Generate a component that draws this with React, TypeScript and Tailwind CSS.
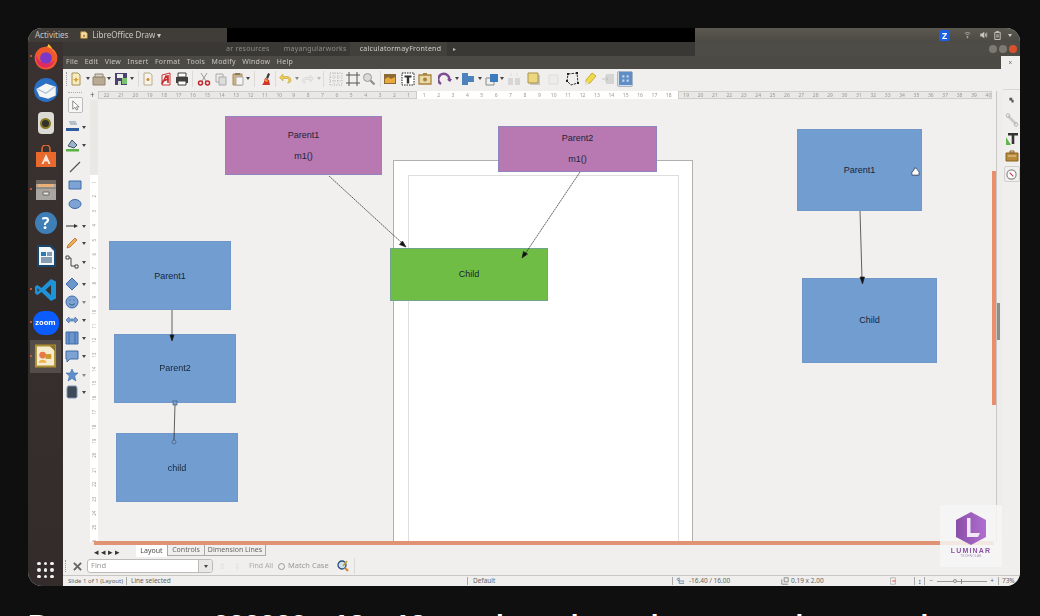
import type { ReactNode } from "react";

const left = Array.from({ length: 22 }, (_, i) => 22 - i);
const mid = Array.from({ length: 18 }, (_, i) => i + 1);
const right = Array.from({ length: 22 }, (_, i) => i + 19);
const vert = Array.from({ length: 26 }, (_, i) => i + 1);

function I({ children, className = "" }: { children: ReactNode; className?: string }) {
  return (
    <svg viewBox="0 0 14 14" className={"w-[14px] h-[14px] shrink-0 " + className}>
      {children}
    </svg>
  );
}

function Drop({ className = "" }: { className?: string }) {
  return (
    <span className={"w-0 h-0 shrink-0 border-x-[2px] border-t-[3px] border-x-transparent border-t-[#444] " + className} />
  );
}

function Sep({ className = "" }: { className?: string }) {
  return <span className={"w-px h-[16px] bg-[#dcdad7] shrink-0 " + className} />;
}

function Node({ className, children }: { className: string; children: ReactNode }) {
  return (
    <div className={"absolute flex flex-col items-center justify-center text-[9px] leading-none font-['Liberation_Sans',sans-serif] text-[#172538] " + className}>
      {children}
    </div>
  );
}

function Dock({ children, pip = false, active = false }: { children: ReactNode; pip?: boolean; active?: boolean }) {
  return (
    <div className={active ? "relative h-[33.3px] flex items-center justify-center bg-[#544c49] mx-[2px]" : "relative h-[33.3px] flex items-center justify-center"}>
      {pip && <span className={active ? "absolute left-0 top-[15px] w-[2px] h-[2px] rounded-full bg-[#e9643a]" : "absolute left-[2px] top-[15px] w-[2px] h-[2px] rounded-full bg-[#e9643a]"} />}
      {children}
    </div>
  );
}

function Ruler({ nums, className }: { nums: number[]; className: string }) {
  return (
    <div className={"flex items-center h-[8px] overflow-hidden " + className}>
      {nums.map((n) => (
        <span key={n} className="w-[14.4px] shrink-0 text-center text-[5px] leading-none text-[#9a9895]">
          {n}
        </span>
      ))}
    </div>
  );
}

function Toolbar() {
  return (
    <div className="h-[22px] pb-[3px] bg-[#f0efed] flex items-center">
      <span className="ml-[3px] w-px h-[14px] border-l border-dotted border-[#999] shrink-0" />
      <I className="ml-[2px]"><path d="M3 1h6l2 2v10H3z" fill="#f5ecc0" stroke="#a39257" /><path d="M7 5l1 2 2 .5-2 1-1 2-1-2-2-1 2-.5z" fill="#e09a2b" /></I>
      <Drop className="ml-[3px]" />
      <I className="ml-[2px]"><path d="M1 5h12v8H1z" fill="#b9ab93" stroke="#8f8371" /><path d="M3 2h8v3H3z" fill="#d9d2c2" stroke="#8f8371" /></I>
      <Drop className="ml-[1px]" />
      <I className="ml-[3px]"><path d="M1 1h12v12H1z" fill="#4b4270" /><path d="M3 2h6v4H3z" fill="#eee" /><path d="M8 6h5v6H8z" fill="#79c46e" /><path d="M4 9h3v4H4z" fill="#ddd" /></I>
      <Drop className="ml-[2px]" />
      <Sep className="ml-[4px]" />
      <I className="ml-[2px]"><path d="M3 1h6l2 2v10H3z" fill="#f7f3e8" stroke="#b7ab92" /><circle cx="7" cy="7.5" r="1.5" fill="#d5872a" /></I>
      <I className="ml-[4px]"><path d="M3 13V3l8-2v12z" fill="#f8f4f2" stroke="#c43535" /><path d="M3 12l4-8 2 3-5 2zM9 3v8" stroke="#c92a2a" strokeWidth="1.6" fill="none" /></I>
      <I className="ml-[2px]"><path d="M1 5h12v6H1z" fill="#3f3f3f" /><path d="M3 1h8v4H3z" fill="#fff" stroke="#3f3f3f" /><path d="M3 9h8v4H3z" fill="#fff" stroke="#3f3f3f" /></I>
      <Sep className="ml-[3px]" />
      <I className="ml-[4px]"><path d="M4 1l5 8M10 1L5 9" stroke="#999" fill="none" /><circle cx="3.5" cy="11" r="2" fill="none" stroke="#c1272d" strokeWidth="1.5" /><circle cx="10.5" cy="11" r="2" fill="none" stroke="#c1272d" strokeWidth="1.5" /></I>
      <I className="ml-[3px]"><path d="M2 2h7v8H2z" fill="#ececec" stroke="#aaa" /><path d="M5 5h7v8H5z" fill="#dcdcdc" stroke="#aaa" /></I>
      <I className="ml-[3px]"><path d="M2 2h9v11H2z" fill="#cdb184" stroke="#a78c5f" /><path d="M5 5h7v8H5z" fill="#f4f4f2" stroke="#aaa" /><path d="M4 1h5v2H4z" fill="#8a7b60" /></I>
      <Drop className="ml-[1px]" />
      <Sep className="ml-[4px]" />
      <I className="ml-[5px]"><path d="M8 1l2 1-2 5-2-1z" fill="#3b3b3b" /><path d="M5 6l4 2 1 5H2c2-2 2-4 3-7z" fill="#d1342b" /><path d="M5 7l3 1.5-.6 1.5L4.500 9z" fill="#e9a13b" /></I>
      <Sep className="ml-[1px]" />
      <I className="ml-[2px]"><path d="M5 2L1.500 5.500 5 9V6.500h4c2 0 2.500 3 .5 4.500 3 0 4-2 3.200-4C12 4.800 10 4.500 9 4.500H5z" fill="#eccb55" stroke="#b79a2c" strokeWidth=".5" /></I>
      <Drop className="ml-[3px] border-t-[#888]" />
      <I className="ml-[2px]"><path d="M9 3l3.500 3.500L9 10V7.500H5c-2 0-2.500 2.500-.5 3.500-3 0-4-2-3-3.500C2.500 5.500 4 5.500 5 5.500h4z" fill="#e6e6e4" stroke="#cfcfcd" strokeWidth=".5" /></I>
      <Drop className="ml-[2px] border-t-[#bbb]" />
      <Sep className="ml-[2px]" />
      <I className="ml-[5px]"><path d="M1 1h12v12H1z" fill="none" stroke="#999" strokeDasharray=".8 1.600" /><path d="M1 5h12M1 9h12M5 1v12M9 1v12" stroke="#aaa" strokeDasharray=".8 1.600" /></I>
      <I className="ml-[3px]"><path d="M3 0v14M11 0v14M0 3h14M0 11h14" stroke="#555" /></I>
      <I className="ml-[2px]"><circle cx="5.500" cy="5.500" r="4" fill="#d9d9d9" stroke="#9a9a9a" /><path d="M8.500 8.500l4 4" stroke="#8a8a8a" strokeWidth="2" /></I>
      <Sep className="ml-[4px]" />
      <I className="ml-[2px]"><path d="M1 2h12v10H1z" fill="#8d6a33" /><path d="M2 7l3-2 3 2 4-2v6H2z" fill="#e8a93d" /></I>
      <I className="ml-[4px]"><path d="M1 1h12v12H1z" fill="#fff" stroke="#222" strokeDasharray="1.500 1" /><path d="M3.500 3.500h7v2h-2.300v6H5.800v-6H3.500z" fill="#333" /></I>
      <I className="ml-[3px]"><path d="M1 3h12v9H1z" fill="#e9d9a9" stroke="#a9843f" strokeWidth="1.300" /><circle cx="7" cy="7.500" r="2" fill="#a9843f" /><path d="M5 1h4v2H5z" fill="#a9843f" /></I>
      <I className="ml-[6px]"><path d="M3 12A5.500 5.500 0 1 1 11 9" fill="none" stroke="#7d4d93" strokeWidth="2.600" /><path d="M9 7l3 3 2-3z" fill="#7d4d93" /></I>
      <Drop className="ml-[3px]" />
      <I className="ml-[2px]"><path d="M1 1h6v12H1z" fill="#4d83bd" /><path d="M7 4h6v6H7z" fill="#4d83bd" /></I>
      <Drop className="ml-[3px]" />
      <I className="ml-[3px]"><path d="M1 6h8v7H1z" fill="none" stroke="#888" /><path d="M5 2h8v8H5z" fill="#3d7bc0" /></I>
      <Drop className="ml-[1px]" />
      <I className="ml-[3px]"><path d="M1 6h5v7H1zM8 6h5v7H8z" fill="#d6d6d6" /><path d="M4 1v3M10 1v3" stroke="#ddd" /></I>
      <I className="ml-[6px]"><path d="M3 3h10v10H3z" fill="#aaa" opacity=".6" /><path d="M1 1h10v10H1z" fill="#ecd77e" stroke="#a8934a" /></I>
      <I className="ml-[5px]"><path d="M3 3h9v9H3z" fill="#ececec" stroke="#dcdcdc" /></I>
      <I className="ml-[5px]"><path d="M3 2l9-1 1 10-7 2-4-4z" fill="none" stroke="#333" strokeDasharray="2.500 1" /><path d="M2 1h2v2H2zM11 0h2v2h-2zM12 10h2v2h-2zM1 8h2v2H1z" fill="#222" /></I>
      <I className="ml-[4px]"><path d="M3 8l6-7 4 3-6 7-4 1z" fill="#efd94f" stroke="#c9ae2a" /><path d="M3 9l-1 4 4-1z" fill="#e6e2d5" /></I>
      <I className="ml-[4px]"><path d="M5 2h8v10H5z" fill="#d4d4d2" /><path d="M1 7h6M4 4.500L7 7 4 9.500" stroke="#c3c3c1" fill="none" /></I>
      <span className="ml-[2px] w-[16px] h-[16px] rounded-[2px] border border-[#a9b4c4] bg-[#d9dfe8] flex items-center justify-center shrink-0">
        <svg viewBox="0 0 12 12" className="w-[13px] h-[13px]"><path d="M0 0h12v12H0z" fill="#5f8dc6" /><path d="M3 3h2v2H3zM7 3h2v2H7zM3 7h2v2H3zM7 7h2v2H7z" fill="#c5d6ea" /></svg>
      </span>
    </div>
  );
}

function LeftBar() {
  return (
    <div className="w-[27px] shrink-0 bg-[#f0efed] flex flex-col pl-[1px]">
      <span className="mt-[1px] ml-[4px] w-[14px] border-t border-dotted border-[#aaa]" />
      <span className="mt-[4px] ml-[4px] w-[15px] h-[16px] rounded-[2px] border border-[#bdbdbd] bg-[#f6f6f5] flex items-center justify-center">
        <svg viewBox="0 0 12 12" className="w-[11px] h-[11px]"><path d="M3 1v9l2.500-2 1.500 3 1.500-.8L7 7.500h3z" fill="#fff" stroke="#555" strokeWidth=".7" /></svg>
      </span>
      <div className="mt-[7px] h-[14px] flex items-center ml-[1px]">
        <I><path d="M4 2h7M5 4h7" stroke="#7a8eaa" /><path d="M1 8h13v3H1z" fill="#2e5c9e" /></I><Drop className="ml-[3px]" />
      </div>
      <div className="mt-[4px] h-[14px] flex items-center ml-[1px]">
        <I><path d="M3 8l4-6 5 5-3 3z" fill="#9bb4c9" stroke="#44536a" /><path d="M1 11h13v2.500H1z" fill="#5ab043" /></I><Drop className="ml-[3px]" />
      </div>
      <I className="mt-[8px] ml-[4px]"><path d="M2 12L12 2" stroke="#555" strokeWidth="1.200" /></I>
      <I className="mt-[4px] ml-[4px]"><path d="M1 3h12v8H1z" fill="#7da2d4" stroke="#3e6ca8" /></I>
      <I className="mt-[5px] ml-[4px]"><ellipse cx="7" cy="7" rx="6" ry="4.500" fill="#7da2d4" stroke="#3e6ca8" /></I>
      <div className="mt-[8px] h-[14px] flex items-center ml-[1px]">
        <I><path d="M1 7h9" stroke="#333" /><path d="M13 7l-4-2v4z" fill="#333" /></I><Drop className="ml-[3px]" />
      </div>
      <div className="mt-[3px] h-[14px] flex items-center ml-[1px]">
        <I><path d="M2 12l1-3 7-7 2 2-7 7z" fill="#eab24a" stroke="#b5562a" strokeWidth=".7" /></I><Drop className="ml-[3px]" />
      </div>
      <div className="mt-[5px] h-[14px] flex items-center ml-[1px]">
        <I><path d="M3 3h3v8h5" fill="none" stroke="#444" /><path d="M1 1h3v3H1zM10 10h3v3h-3z" fill="#fff" stroke="#444" /></I><Drop className="ml-[3px]" />
      </div>
      <div className="mt-[8px] h-[14px] flex items-center ml-[1px]">
        <I><path d="M7 1l6 6-6 6-6-6z" fill="#6b95cb" stroke="#3e6ca8" /></I><Drop className="ml-[3px]" />
      </div>
      <div className="mt-[4px] h-[14px] flex items-center ml-[1px]">
        <I><circle cx="7" cy="7" r="6" fill="#7da2d4" stroke="#3e6ca8" /><path d="M4.500 5h1M8.500 5h1M4 8.500c2 2 4 2 6 0" stroke="#2d5288" fill="none" /></I><Drop className="ml-[3px] border-t-[#888]" />
      </div>
      <div className="mt-[4px] h-[14px] flex items-center ml-[1px]">
        <I><path d="M1 7l3-3v2h6V4l3 3-3 3V8H4v2z" fill="#7da2d4" stroke="#3e6ca8" strokeWidth=".7" /></I><Drop className="ml-[3px]" />
      </div>
      <div className="mt-[4px] h-[14px] flex items-center ml-[1px]">
        <I><path d="M1 1h12v12H1z" fill="#6b95cb" stroke="#3e6ca8" /><path d="M4 1v12M10 1v12" stroke="#3e6ca8" /></I><Drop className="ml-[3px]" />
      </div>
      <div className="mt-[4px] h-[14px] flex items-center ml-[1px]">
        <I><path d="M1 2h12v8H5l-3 3v-3H1z" fill="#7da2d4" stroke="#3e6ca8" /></I><Drop className="ml-[3px]" />
      </div>
      <div className="mt-[5px] h-[14px] flex items-center ml-[1px]">
        <I><path d="M7 1l1.800 4H13l-3.300 3 1.200 5L7 10.500 3.100 13l1.200-5L1 5h4.200z" fill="#5f8fcb" stroke="#3e6ca8" strokeWidth=".6" /></I><Drop className="ml-[3px] border-t-[#888]" />
      </div>
      <div className="mt-[3px] h-[14px] flex items-center ml-[1px]">
        <I><path d="M3 1h8l1 2v9l-1 1H3l-1-1V3z" fill="#3f4a58" stroke="#7f93ad" /></I><Drop className="ml-[3px]" />
      </div>
    </div>
  );
}

function Canvas() {
  return (
    <div className="relative flex-1 bg-[#f2f0ee] overflow-hidden">
      {/* page and margin */}
      <div className="absolute left-[295px] top-[60px] w-[300px] h-[400px] bg-white border border-[#b0b0b0]" />
      <div className="absolute left-[310px] top-[75px] w-[271px] h-[380px] border border-[#dedede]" />

      <Node className="left-[127px] top-[16px] w-[157px] h-[59px] bg-[#b878b2] border border-[#9086bd] gap-[12px] text-[#2a1a2b]">
        <span>Parent1</span>
        <span>m1()</span>
      </Node>
      <Node className="left-[400px] top-[26px] w-[159px] h-[46px] bg-[#b878b2] border border-[#9086bd] gap-[12px] text-[#2a1a2b]">
        <span>Parent2</span>
        <span>m1()</span>
      </Node>
      <Node className="left-[292px] top-[148px] w-[158px] h-[53px] bg-[#70bd46] border border-[#71a58a] text-[#1d3612]">Child</Node>
      <Node className="left-[11px] top-[141px] w-[122px] h-[69px] pt-[1px] bg-[#729dd0] border border-[#6f98c8]">Parent1</Node>
      <Node className="left-[16px] top-[234px] w-[122px] h-[69px] bg-[#729dd0] border border-[#6f98c8]">Parent2</Node>
      <Node className="left-[18px] top-[333px] w-[122px] h-[69px] pt-[1px] bg-[#729dd0] border border-[#6f98c8]">child</Node>
      <Node className="left-[699px] top-[29px] w-[125px] h-[82px] bg-[#729dd0] border border-[#6f98c8]">Parent1</Node>
      <Node className="left-[704px] top-[178px] w-[135px] h-[85px] bg-[#729dd0] border border-[#6f98c8]">Child</Node>

      {/* connectors */}
      <svg className="absolute left-0 top-0 w-[894px] h-[442px]" viewBox="98 100 894 442">
        <g stroke="#222" strokeWidth=".7" fill="#111">
          <path d="M329 176L402 243" strokeDasharray="2 .6" />
          <path d="M406 247l-6.500-2.500 3-3.500z" />
          <path d="M580 172L525 254" strokeDasharray="2 .6" />
          <path d="M522 258l1.500-6.500 4 2.500z" />
          <path d="M860 211L862 279" />
          <path d="M862.500 284l-2.500-7h4.500z" />
          <path d="M172 310V340" />
          <path d="M172 341l-2-6h4z" />
          <path d="M175 404L174 440" />
        </g>
        <rect x="173" y="401" width="4" height="4" fill="#7f9fc8" stroke="#33507a" strokeWidth=".6" />
        <circle cx="174" cy="442" r="2" fill="#7f9fc8" stroke="#33507a" strokeWidth=".6" />
      </svg>

      {/* hand cursor */}
      <svg viewBox="0 0 10 10" className="absolute left-[813px] top-[67px] w-[9px] h-[9px]">
        <path d="M1 9V5.500L3 4l1-3 2 .5 1 1.500 2 2.500V9z" fill="#fff" stroke="#25364e" strokeWidth=".8" />
      </svg>
    </div>
  );
}

function SideBar() {
  return (
    <div className="flex shrink-0">
      {/* scrollbar column */}
      <div className="w-[4px] pt-[80px] bg-[#f2f0ee]">
        <div className="h-[234px] bg-[#e98f6c]" />
      </div>
      <div className="w-[7px] flex flex-col border-l border-[#c9c7c4] bg-[#eeedeb]">
        <div className="mt-[212px] w-[3px] h-[37px] bg-[#8f8d89]" />
      </div>
      <div className="w-[17px] bg-[#f0efed] border-t border-[#d9d7d4] -mt-[2px] flex flex-col items-center">
        <svg viewBox="0 0 10 10" className="mt-[7px] w-[7px] h-[7px]"><path d="M2 1h4v3h2v4H5V5H2z" fill="#555" /></svg>
        <I className="mt-[9px]"><path d="M3 3l8 8" stroke="#c9c9c9" strokeWidth="2.500" /><circle cx="3" cy="2.500" r="1.800" fill="none" stroke="#b5b5b5" /><circle cx="11" cy="11.500" r="1.800" fill="none" stroke="#b5b5b5" /></I>
        <I className="mt-[5px]"><path d="M1 5l5 8H1z" fill="#66b44b" /><path d="M3 1h10v2.500H9.300V12H6.700V3.500H3z" fill="#333" /></I>
        <I className="mt-[3px]"><path d="M1 4h12v8H1z" fill="#b88a3a" stroke="#8a6523" /><path d="M5 2h4v2H5z" fill="none" stroke="#8a6523" /><path d="M3 7h8" stroke="#e6d3a5" /></I>
        <span className="mt-[3px] w-[16px] h-[16px] rounded-[2px] border border-[#cfcfcf] flex items-center justify-center">
          <svg viewBox="0 0 12 12" className="w-[11px] h-[11px]"><circle cx="6" cy="6" r="5" fill="#fff" stroke="#888" strokeWidth="1.300" /><path d="M4 4l4 4" stroke="#c33a5a" strokeWidth="1.300" /></svg>
        </span>
      </div>
    </div>
  );
}

export default function App() {
  return (
    <div className="w-[1040px] h-[616px] bg-[#0f0f0f] overflow-hidden pt-[28px] px-[28px] font-['Noto_Sans',sans-serif]">
      <div className="relative w-[992px] h-[558px] rounded-[14px] overflow-hidden flex flex-col bg-[#f0efed] blur-[0.4px]">
        {/* top panel */}
        <div className="h-[14px] flex shrink-0">
          <div className="w-[199px] bg-[#403d39] flex items-center text-[8px] text-[#c8c5be]">
            <span className="ml-[7px]">Activities</span>
            <svg viewBox="0 0 10 10" className="ml-[12px] w-[8px] h-[8px]"><path d="M1 1h6l2 2v6H1z" fill="#f2e3b1" stroke="#c08b2c" /><circle cx="5" cy="6" r="1.500" fill="#d07d2c" /></svg>
            <span className="ml-[4px]">LibreOffice Draw ▾</span>
          </div>
          <div className="w-[468px] bg-black" />
          <div className="flex-1 bg-gradient-to-b from-[#5b584f] to-[#4c4a45] flex items-center">
            <span className="ml-[244px] w-[11px] h-[11px] rounded-[2px] bg-[#1c5fe0] flex items-center justify-center text-[9px] font-bold leading-none text-white">Z</span>
            <svg viewBox="0 0 10 10" className="ml-[14px] w-[7px] h-[8px]"><path d="M1 3c2-2 6-2 8 0M3 5c1-1 3-1 4 0M4.500 7h1v2h-1z" stroke="#c7c5bf" fill="none" /></svg>
            <svg viewBox="0 0 10 10" className="ml-[8px] w-[9px] h-[8px]"><path d="M1 3h2l3-2v8L3 7H1z" fill="#c7c5bf" /><path d="M7.500 3v4M9 2v6" stroke="#c7c5bf" /></svg>
            <svg viewBox="0 0 10 10" className="ml-[5px] w-[9px] h-[10px]"><path d="M2 2h6v8H2zM4 1h2v1H4z" fill="none" stroke="#cfcdc7" /><path d="M3.500 5h3M3.500 7h3" stroke="#cfcdc7" /></svg>
            <Drop className="ml-[6px] border-t-[#cfcdc7]" />
          </div>
        </div>

        <div className="flex-1 flex min-h-0">
          {/* dock */}
          <div className="w-[35px] shrink-0 bg-gradient-to-b from-[#3a3230] to-[#332c2b] flex flex-col">
            <div className="-mt-[2px]" />
            <Dock pip>
              <svg viewBox="0 0 24 24" className="w-[26px] h-[26px]">
                <circle cx="12" cy="13" r="10.500" fill="#f0582d" />
                <path d="M11 3c5-1 11 4 11 10 0-3-2-6-4-7 0-2-2-5-4-6 0 2-1 3-3 3z" fill="#ffc131" />
                <circle cx="12" cy="13" r="5.500" fill="#7c39c9" />
                <path d="M3 10c1 5 6 9 11 8 3-.5 5-2 6-4-1 5-5 8-9 8-5 0-9-5-8-12z" fill="#e02b5f" />
              </svg>
            </Dock>
            <Dock>
              <svg viewBox="0 0 24 24" className="w-[26px] h-[26px]">
                <circle cx="12" cy="12" r="11" fill="#2a6fc4" />
                <path d="M3 11l9-5 9 3v8l-7 3-8-2z" fill="#f5f5f5" />
                <path d="M4 11l8 4 8-6" fill="none" stroke="#a9c0da" />
              </svg>
            </Dock>
            <Dock>
              <span className="w-[16px] h-[22px] rounded-[4px] bg-[#dcdad4] flex items-center justify-center">
                <span className="w-[11px] h-[11px] rounded-full bg-[#33312c] border-2 border-[#8a7a24]" />
              </span>
            </Dock>
            <Dock>
              <svg viewBox="0 0 24 24" className="w-[24px] h-[24px]">
                <path d="M2 7h20v15H2z" fill="#e9692c" />
                <path d="M8 7V4a4 4 0 0 1 8 0v3" fill="none" stroke="#e9692c" strokeWidth="1.500" />
                <path d="M12 9l4.500 10h-2l-1-2.500h-3L9.500 19h-2z" fill="#f8e6dc" />
              </svg>
            </Dock>
            <Dock pip>
              <svg viewBox="0 0 24 24" className="w-[24px] h-[24px]">
                <path d="M2 2h20v20H2z" fill="#a9a6a1" />
                <path d="M2 2h20v4H2z" fill="#6b665f" />
                <path d="M4 6h16v3H4z" fill="#e9b077" />
                <path d="M2 10h20" stroke="#77736d" />
                <path d="M9 14h6v3H9z" fill="#ececec" stroke="#6b665f" />
              </svg>
            </Dock>
            <Dock>
              <span className="w-[22px] h-[22px] rounded-full bg-[#3f7fb8] flex items-center justify-center text-[16px] font-bold leading-none text-white">?</span>
            </Dock>
            <Dock>
              <svg viewBox="0 0 24 24" className="w-[24px] h-[24px]">
                <path d="M3 1h14l5 5v17H3z" fill="#18476e" />
                <path d="M5 3h11l4 4v14H5z" fill="#f4f6f8" />
                <path d="M7 8h5v4H7z" fill="#2b7cb5" />
                <path d="M13 9h5M13 11h5M7 14h11M7 16h11M7 18h11" stroke="#18476e" />
              </svg>
            </Dock>
            <Dock pip>
              <svg viewBox="0 0 24 24" className="w-[24px] h-[24px]">
                <path d="M17 1l5 2.500v17L17 23 7.500 14l-4 3L1 15.500v-7L3.500 7l4 3z" fill="#1f93da" />
                <path d="M17 7l-5.500 5 5.500 5z" fill="#33312f" />
                <path d="M3.500 10v4l2-2z" fill="#33312f" />
              </svg>
            </Dock>
            <Dock pip>
              <span className="w-[26px] h-[24px] rounded-[11px] bg-[#0b5cff] flex items-center justify-center text-[7.500px] font-bold leading-none text-white">zoom</span>
            </Dock>
            <Dock pip active>
              <svg viewBox="0 0 24 24" className="w-[23px] h-[24px]">
                <path d="M2 1h20v22H2z" fill="#f5ecd0" stroke="#ad8f2e" strokeWidth="2" />
                <path d="M16 1h6v6z" fill="#8a7224" />
                <circle cx="9" cy="11" r="3.500" fill="#e9774a" />
                <path d="M5 19c0-4 8-4 8 0z" fill="#efb34c" />
                <path d="M12 10h6v5h-6z" fill="#c79a2a" />
              </svg>
            </Dock>
            <div className="mt-auto mb-[8px] mx-auto grid grid-cols-3 gap-x-[3px] gap-y-[3px]">
              {Array.from({ length: 9 }, (_, i) => (
                <span key={i} className="w-[3.500px] h-[3.500px] rounded-full bg-[#f2f2f2]" />
              ))}
            </div>
          </div>

          {/* libreoffice window */}
          <div className="flex-1 min-w-0 flex flex-col">
            <div className="h-[14px] flex shrink-0 text-[7px] tracking-[0.25px] text-[#8f8d86]">
              <div className="w-[632px] bg-[#393834] flex items-center">
                <span className="ml-[163px]">ar resources</span>
                <span className="ml-[14px]">mayangularworks</span>
                <span className="ml-[3px] h-[14px] pl-[10px] pr-[6px] bg-[#41403b] flex items-center text-[#d2d0c9]">calculatormayFrontend</span>
                <span className="ml-[6px] text-[#bbb] text-[6px]">▸</span>
              </div>
              <div className="flex-1 bg-[#4e4c46] flex items-center justify-end pr-[3px] gap-[2px]">
                <span className="w-[8px] h-[8px] rounded-full bg-[#7c7a73]" />
                <span className="w-[8px] h-[8px] rounded-full bg-[#7c7a73]" />
                <span className="w-[8px] h-[8px] rounded-full bg-[#d9512c]" />
              </div>
            </div>
            <div className="h-[13px] bg-[#4b4a45] flex items-center shrink-0 text-[7px] tracking-[0.25px] text-[#c9c6bf]">
              <div className="ml-[3px] flex gap-[6.500px] flex-1">
                <span>File</span><span>Edit</span><span>View</span><span>Insert</span><span>Format</span><span>Tools</span><span>Modify</span><span>Window</span><span>Help</span>
              </div>
              <span className="w-[19px] h-[13px] bg-[#f0efed] text-[#555] text-[6px] flex items-center justify-center">x</span>
            </div>
            <Toolbar />

            <div className="flex-1 min-h-0 flex">
              <LeftBar />
              <div className="flex-1 min-w-0 flex flex-col">
                {/* horizontal ruler */}
                <div className="h-[9px] flex shrink-0 bg-[#f0efed]">
                  <span className="w-[8px] text-[8px] leading-[8px] text-[#555]">+</span>
                  <Ruler nums={left} className="w-[319px] bg-[#e9e8e5] border border-[#cfcdca] justify-end" />
                  <Ruler nums={mid} className="w-[261px] bg-white" />
                  <Ruler nums={right} className="w-[314px] bg-[#e9e8e5] border border-[#cfcdca]" />
                </div>
                <div className="flex-1 min-h-0 flex">
                  <div className="w-[8px] shrink-0 bg-white flex flex-col overflow-hidden">
                    <div className="h-[75px] shrink-0 bg-[#e9e8e5]" />
                    {vert.map((n) => (
                      <span key={n} className="h-[14.400px] shrink-0 flex items-center justify-center text-[4.500px] leading-none text-[#9a9895] -rotate-90">{n}</span>
                    ))}
                  </div>
                  <Canvas />
                </div>
              </div>
              <SideBar />
            </div>

            {/* slide tabs */}
            <div className="h-[15px] shrink-0 bg-[#f0efed] relative text-[7px] text-[#4a4a48] flex items-start">
              <div className="absolute left-[31px] top-[-1px] right-[26px] h-[4px] bg-[#df9274]" />
              <div className="ml-[31px] w-[42px] h-full flex items-center gap-[2px] pt-[3px] text-[#333]">
                <span className="text-[9px] leading-none">◂</span><span className="text-[9px] leading-none">◂</span><span className="text-[9px] leading-none">▸</span><span className="text-[9px] leading-none">▸</span>
              </div>
              <span className="h-[12px] mt-[3px] w-[31px] bg-white flex items-center justify-center">Layout</span>
              <span className="h-[11px] mt-[3px] w-[38px] border border-t-0 border-[#aaa] flex items-center justify-center text-[#666]">Controls</span>
              <span className="h-[11px] mt-[3px] w-[61px] border border-t-0 border-l-0 border-[#aaa] flex items-center justify-center text-[#666]">Dimension Lines</span>
            </div>

            {/* find bar */}
            <div className="h-[18px] shrink-0 bg-[#f0efed] flex items-center text-[7.500px] text-[#777]">
              <span className="ml-[2px] w-px h-[12px] border-l border-dotted border-[#999]" />
              <svg viewBox="0 0 10 10" className="ml-[7px] w-[9px] h-[9px]"><path d="M1 1l8 8M9 1L1 9" stroke="#666" strokeWidth="2.200" /></svg>
              <div className="ml-[5px] w-[126px] h-[14px] rounded-[3px] border border-[#bbb] bg-white flex items-center justify-between">
                <span className="ml-[3px] text-[#999]">Find</span>
                <span className="w-[14px] h-full border-l border-[#bbb] bg-[#e9e8e6] flex items-center justify-center rounded-r-[3px]"><Drop /></span>
              </div>
              <span className="ml-[6px] text-[#d9d9d7] text-[8px]">⇧</span>
              <span className="ml-[8px] text-[#d9d9d7] text-[8px]">⇩</span>
              <span className="ml-[8px] text-[#aaa] text-[7px]">Find All</span>
              <span className="ml-[5px] w-[7px] h-[7px] rounded-full border border-[#999]" />
              <span className="ml-[3px] text-[#999]">Match Case</span>
              <svg viewBox="0 0 12 12" className="ml-[8px] w-[12px] h-[12px]"><circle cx="5" cy="5" r="4" fill="#cfe0f0" stroke="#2a4e7c" strokeWidth="1.300" /><path d="M8 8l3 3" stroke="#e0812e" strokeWidth="2" /><path d="M10 1L6 6" stroke="#c8a02a" strokeWidth="1.500" /></svg>
              <span className="ml-[5px] w-px h-[16px] bg-[#dcdad7]" />
            </div>

            {/* status bar */}
            <div className="h-[11px] shrink-0 bg-[#f0efed] border-t border-[#c8c7c4] flex items-center text-[6.500px] leading-none text-[#666] whitespace-nowrap">
              <span className="ml-[5px] w-[58px] text-[6px]">Slide 1 of 1 (Layout)</span>
              <span className="w-px h-[8px] bg-[#aaa]" />
              <span className="ml-[4px] w-[336px]">Line selected</span>
              <span className="w-px h-[8px] bg-[#aaa]" />
              <span className="ml-[5px] w-[199px]">Default</span>
              <span className="w-px h-[8px] bg-[#aaa]" />
              <svg viewBox="0 0 10 10" className="ml-[3px] w-[8px] h-[8px]"><path d="M1 3l3-2v4zM4 5h6v3H4z" fill="none" stroke="#5a7ea8" /></svg>
              <span className="ml-[5px] w-[92px]">-16.40 / 16.00</span>
              <svg viewBox="0 0 10 10" className="w-[8px] h-[8px]"><path d="M1 9V3M1 9h8M4 6V1h5v5z" fill="none" stroke="#777" /></svg>
              <span className="ml-[2px] w-[98px]">0.19 x 2.00</span>
              <svg viewBox="0 0 10 10" className="w-[8px] h-[8px]"><path d="M2 1h6v8H2z" fill="#f5f5f5" stroke="#aaa" /><path d="M4 5h4" stroke="#d22" /></svg>
              <span className="ml-[17px] w-px h-[8px] bg-[#aaa]" />
              <span className="ml-[3px] text-[#222] text-[7px]">↕</span>
              <span className="ml-[2px] w-px h-[8px] bg-[#aaa]" />
              <span className="ml-[5px]">−</span>
              <span className="ml-[4px] relative w-[50px] h-px bg-[#999]">
                <span className="absolute left-[16px] top-[-2px] w-[4px] h-[4px] rounded-full bg-[#f0efed] border border-[#888]" />
                <span className="absolute left-[24px] top-[-2px] w-px h-[5px] bg-[#888]" />
              </span>
              <span className="ml-[3px]">+</span>
              <span className="ml-[4px] w-px h-[8px] bg-[#aaa]" />
              <span className="ml-[3px]">73%</span>
            </div>
          </div>
        </div>

        {/* watermark */}
        <div className="absolute left-[912px] top-[477px] w-[62px] h-[62px] bg-[#f7f6f6]/85 flex flex-col items-center">
          <svg viewBox="0 0 30 33" className="mt-[7px] w-[30px] h-[33px]">
            <defs>
              <linearGradient id="hex" x1="0" x2="1" y1="0" y2="0">
                <stop offset="0" stopColor="#8a4fa8" />
                <stop offset="1" stopColor="#b06fd0" />
              </linearGradient>
            </defs>
            <path d="M15 0l15 8v17l-15 8-15-8V8z" fill="url(#hex)" />
            <path d="M11 6h3.500v15H24l-2 4H11z" fill="#f2e8f5" />
          </svg>
          <span className="mt-[2px] font-['Liberation_Sans',sans-serif] text-[7px] leading-none font-bold tracking-[1.200px] text-[#8a55a6]">LUMINAR</span>
          <span className="mt-[1px] font-['Liberation_Sans',sans-serif] text-[3px] leading-none tracking-[0.300px] text-[#a98bb8]">TECHNOLAB</span>
        </div>
      </div>

      {/* title under the video, only the tops of its letters show */}
      <p className="mt-[25px] flex text-[28px] leading-none font-bold whitespace-nowrap text-white font-['Liberation_Sans',sans-serif]">
        <span>Program</span>
        <span className="ml-[70px]">000000</span>
        <span className="ml-[27px]">12</span>
        <span className="ml-[30px]">12</span>
        <span className="ml-[70px]">in</span>
        <span className="ml-[50px]">in</span>
        <span className="ml-[55px]">in</span>
        <span className="ml-[120px]">in</span>
        <span className="ml-[100px]">in</span>
      </p>
    </div>
  );
}
